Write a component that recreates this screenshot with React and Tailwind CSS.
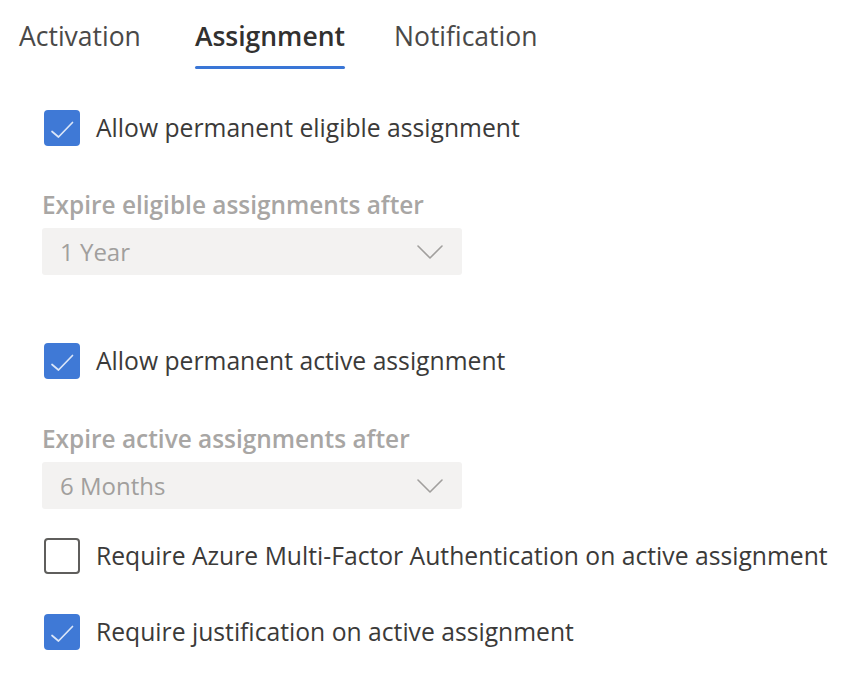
import React from 'react'

const FONT = { fontFamily: '"Open Sans", "Noto Sans", Arial, sans-serif' }

function Check({ checked }) {
  if (!checked) {
    return <span className="w-9 h-9 shrink-0 rounded-[4px] border-2 border-[#5f5e5c] bg-white" />
  }
  return (
    <span className="w-9 h-9 shrink-0 rounded-[4px] bg-[#3f79d6]">
      <svg width="36" height="36" viewBox="0 0 36 36" fill="none">
        <path d="M8 21.5 L14.5 27 L28.5 12.5" stroke="#dbe6f8" strokeWidth="1.7" strokeLinecap="round" strokeLinejoin="round" />
      </svg>
    </span>
  )
}

function CheckRow({ checked, label }) {
  return (
    <div className="flex items-center gap-4 h-9 pl-[44px]">
      <Check checked={checked} />
      <span className="text-[24.7px] leading-9 text-[#3b3a39] whitespace-nowrap">{label}</span>
    </div>
  )
}

function Select({ label, value }) {
  return (
    <div className="pl-[42px]">
      <p className="text-[24.4px] font-semibold text-[#a8a6a4] leading-[30px] whitespace-nowrap">{label}</p>
      <div className="mt-[8px] w-[420px] h-[47px] bg-[#f3f2f1] rounded-[3px] flex items-center justify-between pl-[18px] pr-[19px]">
        <span className="text-[24px] text-[#a19f9d]">{value}</span>
        <svg width="26" height="14" viewBox="0 0 26 14" fill="none">
          <path d="M1 1 L13 13 L25 1" stroke="#a19f9d" strokeWidth="1.6" strokeLinecap="round" strokeLinejoin="round" />
        </svg>
      </div>
    </div>
  )
}

export default function App() {
  return (
    <div className="w-[856px] h-[682px] bg-white overflow-hidden" style={FONT}>
      <div className="flex pl-[19px] pt-[16px]">
        <div className="flex flex-col">
          <span className="text-[26.5px] leading-[40px] whitespace-nowrap text-[#4a4948]">Activation</span>
          <span className="mt-[10px] h-[3px]" />
        </div>
        <div className="flex flex-col ml-[54px]">
          <span className="text-[26.5px] leading-[40px] whitespace-nowrap font-semibold text-[#323130]">Assignment</span>
          <span className="mt-[10px] h-[3px] rounded-full bg-[#3a76d6]" />
        </div>
        <div className="flex flex-col ml-[49px]">
          <span className="text-[26.5px] leading-[40px] whitespace-nowrap text-[#4a4948]">Notification</span>
          <span className="mt-[10px] h-[3px]" />
        </div>
      </div>

      <div className="mt-[41px]">
        <CheckRow checked label="Allow permanent eligible assignment" />
      </div>
      <div className="mt-[44px]">
        <Select label="Expire eligible assignments after" value="1 Year" />
      </div>
      <div className="mt-[68px]">
        <CheckRow checked label="Allow permanent active assignment" />
      </div>
      <div className="mt-[45px]">
        <Select label="Expire active assignments after" value="6 Months" />
      </div>
      <div className="mt-[29px]">
        <CheckRow label="Require Azure Multi-Factor Authentication on active assignment" />
      </div>
      <div className="mt-[40px]">
        <CheckRow checked label="Require justification on active assignment" />
      </div>
    </div>
  )
}
